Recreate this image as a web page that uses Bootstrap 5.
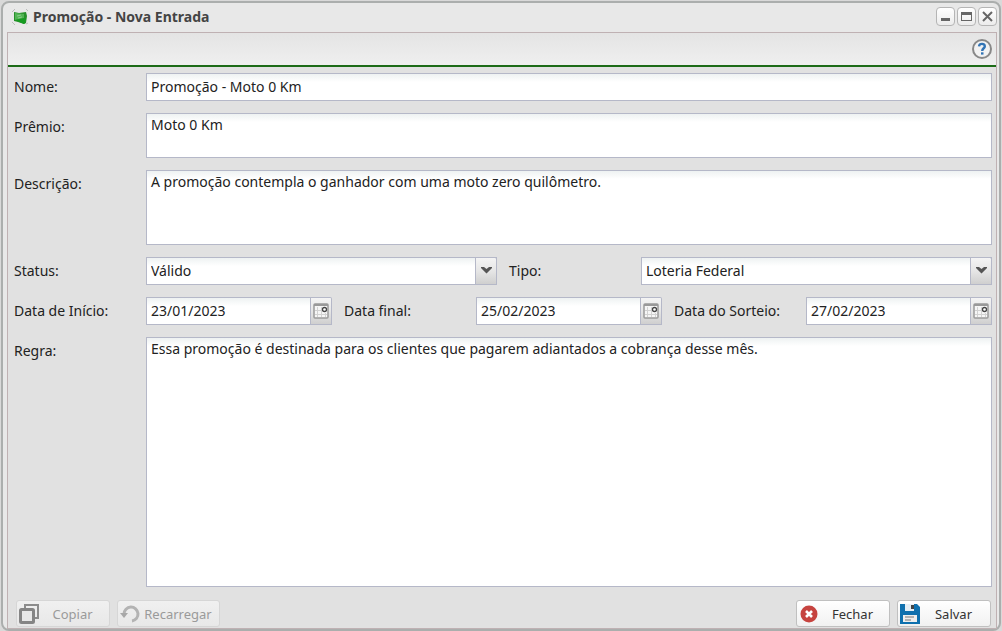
<!DOCTYPE html>
<html lang="pt-BR">
<head>
<meta charset="utf-8">
<meta name="viewport" content="width=device-width, initial-scale=1">
<title>Promoção - Nova Entrada</title>
<link href="https://cdn.jsdelivr.net/npm/bootstrap@5.3.0/dist/css/bootstrap.min.css" rel="stylesheet">
<style>
body{font-family:"Noto Sans",Tahoma,sans-serif;font-size:14px;line-height:20px;color:#222;background:#e6e6e6}
.win{min-height:100vh;padding:1px 1px 0;background:#d9d9d9}
.win-frame{border:2px solid #abaead;border-radius:8px;background:#e8e8e8;padding:0 2px 0 4px}
.win-head{height:29px;padding:0 0 2px 4px}
.win-title{font-size:14px;line-height:20px;font-weight:700;color:#444}
.tools{gap:2px}
.tool{width:19px;height:19px;padding:0;border:1px solid #b5b5b5;border-radius:4px;background:linear-gradient(#fff,#ececec);display:flex;align-items:center;justify-content:center}
.win-body{border:1px solid #bfb1b3;background:#e1e1e1}
.win-bar{height:34px;border-bottom:2px solid #1c6b17;background:linear-gradient(#e4e4e4,#efefef);padding-right:4px}
.help{width:20px;height:20px}
.entry{padding:6px 4px 0 6px;gap:12px}
.entry-row{display:grid;gap:12px}
.two{grid-template-columns:1fr 1fr}
.three{grid-template-columns:1fr 1fr 1fr}
.entry-field{display:flex}
.entry-field>label{flex:0 0 132px;line-height:28px}
.entry-box{flex:1;min-width:0;position:relative;display:flex}
.entry .form-control,.entry .form-select{border:1px solid #b5b8c8;border-radius:0;color:#222;font-size:14px;line-height:20px;padding:2px 4px 4px;min-height:0;background:#fff linear-gradient(#eef2f2,#fff) 0 0/100% 8px no-repeat;resize:none}
.entry .form-select{padding:3px 4px}
.entry textarea.form-control{padding:1px 4px}
.h-line{height:28px}
.h-prize{height:45px}
.h-desc{height:75px}
.trigger{width:21px;height:28px;flex:none;padding:0;border:1px solid #b5b8c8;border-left:0;border-radius:0 2px 0 0;background:linear-gradient(#f4f4f4,#e6e6e6 50%,#cfcfcf);display:flex;align-items:center;justify-content:center}
.over{position:absolute;right:0;top:0;width:22px;border-left:1px solid #b5b8c8;pointer-events:none}
.win-foot{padding:13px 5px 1px 8px;gap:7px}
.act{height:27px;border:1px solid #c0c0c0;border-radius:3px;background:linear-gradient(#fff,#f1f1f1);padding:0 3px 0 2px;color:#333;font-size:13px;line-height:20px;display:flex;align-items:center;width:94px}
.act span{flex:1;text-align:center}
.act:disabled{border-color:#d6d6d6;background:linear-gradient(#f0f0f0,#e8e8e8);color:#9a9a9a;opacity:1}
.act-wide{width:103px}
</style>
</head>
<body>
<main class="win d-flex flex-column">
<div class="win-frame d-flex flex-column flex-grow-1">
<header class="win-head d-flex align-items-center">
<svg width="18" height="18" viewBox="0 0 18 18" class="me-1" aria-hidden="true"><path d="M1 4l3-3M15 1l2 2M1 14l3 3M15 16l2-1" stroke="#bdbdbd" fill="none"/><path d="M3 4l5 1 7-1 1 4-1 7-2 1-6-2-4-1z" fill="#28902c"/><path d="M4 5l9 1v4l-9 2z" fill="#52b454"/><path d="M4 12l11-2-1 5-1 1z" fill="#169b21"/><path d="M6 8l4-1M7 10l4-1" stroke="#8bcf8b"/></svg>
<h1 class="win-title m-0 me-auto">Promoção - Nova Entrada</h1>
<div class="tools d-flex">
<button class="tool" type="button" aria-label="Minimizar"><svg width="15" height="15" viewBox="0 0 15 15"><path d="M3 9h9v3H3z" fill="#666"/></svg></button>
<button class="tool" type="button" aria-label="Maximizar"><svg width="15" height="15" viewBox="0 0 15 15"><path d="M2 3h11v9H2zM3 6v5h9V6z" fill="#666" fill-rule="evenodd"/></svg></button>
<button class="tool" type="button" aria-label="Fechar janela"><svg width="15" height="15" viewBox="0 0 15 15"><path d="M3 3l9 9M12 3l-9 9" stroke="#666" stroke-width="2"/></svg></button>
</div>
</header>
<section class="win-body d-flex flex-column flex-grow-1">
<div class="win-bar d-flex align-items-center justify-content-end">
<button type="button" class="help border-0 p-0 bg-transparent d-flex" aria-label="Ajuda"><svg width="20" height="20" viewBox="0 0 20 20"><circle cx="10" cy="10" r="9" fill="#f2f2f2" stroke="#888" stroke-width="2"/><path d="M7 7.300C7.400 4 13 4.200 12.800 7.300C12.700 9.300 10.200 9.300 10.200 12" fill="none" stroke="#3274b5" stroke-width="2.400"/><path d="M9 13.300h2.500v2.300H9z" fill="#3274b5"/></svg></button>
</div>
<form class="entry d-flex flex-column flex-grow-1">
<div class="entry-field"><label for="nome">Nome:</label><div class="entry-box"><input id="nome" class="form-control h-line" value="Promoção - Moto 0 Km"></div></div>
<div class="entry-field"><label for="premio">Prêmio:</label><div class="entry-box"><textarea id="premio" class="form-control h-prize">Moto 0 Km</textarea></div></div>
<div class="entry-field"><label for="desc">Descrição:</label><div class="entry-box"><textarea id="desc" class="form-control h-desc">A promoção contempla o ganhador com uma moto zero quilômetro.</textarea></div></div>
<div class="entry-row two">
<div class="entry-field"><label for="status">Status:</label><div class="entry-box"><select id="status" class="form-select h-line"><option>Válido</option></select><span class="trigger over"><svg width="13" height="10" viewBox="0 0 13 10"><path d="M1 1h3l2.500 2L9 1h3v1L6.500 7.500 1 2z" fill="#555"/></svg></span></div></div>
<div class="entry-field"><label for="tipo">Tipo:</label><div class="entry-box"><select id="tipo" class="form-select h-line"><option>Loteria Federal</option></select><span class="trigger over"><svg width="13" height="10" viewBox="0 0 13 10"><path d="M1 1h3l2.500 2L9 1h3v1L6.500 7.500 1 2z" fill="#555"/></svg></span></div></div>
</div>
<div class="entry-row three">
<div class="entry-field"><label for="inicio">Data de Início:</label><div class="entry-box"><input id="inicio" class="form-control h-line" value="23/01/2023"><button type="button" class="trigger" aria-label="Abrir calendário"><svg width="16" height="16" viewBox="0 0 16 16"><use href="#cal"/></svg></button></div></div>
<div class="entry-field"><label for="final">Data final:</label><div class="entry-box"><input id="final" class="form-control h-line" value="25/02/2023"><button type="button" class="trigger" aria-label="Abrir calendário"><svg width="16" height="16" viewBox="0 0 16 16"><use href="#cal"/></svg></button></div></div>
<div class="entry-field"><label for="sorteio">Data do Sorteio:</label><div class="entry-box"><input id="sorteio" class="form-control h-line" value="27/02/2023"><button type="button" class="trigger" aria-label="Abrir calendário"><svg width="16" height="16" viewBox="0 0 16 16"><use href="#cal"/></svg></button></div></div>
</div>
<div class="entry-field flex-grow-1"><label for="regra">Regra:</label><div class="entry-box"><textarea id="regra" class="form-control">Essa promoção é destinada para os clientes que pagarem adiantados a cobrança desse mês.</textarea></div></div>
</form>
<footer class="win-foot d-flex">
<button type="button" class="act" disabled><svg width="20" height="20" viewBox="0 0 20 20"><path d="M6 4V1h13v13h-4" fill="none" stroke="#8c8c8c" stroke-width="2"/><rect x="1.500" y="5.500" width="13" height="13" rx="1" fill="#e8e8e8" stroke="#858585" stroke-width="3"/></svg><span>Copiar</span></button>
<button type="button" class="act act-wide" disabled><svg width="20" height="20" viewBox="0 0 20 20"><path d="M4 10a7 7 0 1 1 8 7" fill="none" stroke="#b3b3b3" stroke-width="3"/><path d="M0 9h8l-4 5z" fill="#a8a8a8"/></svg><span>Recarregar</span></button>
<button type="button" class="act ms-auto"><svg width="20" height="20" viewBox="0 0 20 20"><circle cx="10" cy="10" r="8.500" fill="#c6433f"/><path d="M7 7l6 6M13 7l-6 6" stroke="#fff" stroke-width="2.600"/></svg><span>Fechar</span></button>
<button type="button" class="act"><svg width="20" height="20" viewBox="0 0 20 20"><path d="M0 0h17l3 3v17H0z" fill="#0f70ae"/><path d="M5 0h9v7H5z" fill="#e4eef5"/><path d="M11 1h3v4h-3z" fill="#444"/><path d="M3 11h14v7H3z" fill="#eee"/><path d="M5 13h9M5 16h6" stroke="#777"/></svg><span>Salvar</span></button>
</footer>
</section>
</div>
</main>
<svg width="0" height="0" class="position-absolute" aria-hidden="true"><symbol id="cal" viewBox="0 0 16 16"><rect x="1" y="1" width="14" height="14" rx="1" fill="#f6f6f6" stroke="#9b9b9b" stroke-width="1.500"/><path d="M1 1h14v2H1z" fill="#999"/><path d="M4.500 4v10M8.500 4v10M12.500 10v4M2 7.500h8M2 11.500h12" stroke="#d2d2d2"/><circle cx="11.500" cy="6.500" r="2" fill="#fff" stroke="#444" stroke-width="1.300"/></symbol></svg>
<script src="https://cdn.jsdelivr.net/npm/bootstrap@5.3.0/dist/js/bootstrap.bundle.min.js"></script>
</body>
</html>
